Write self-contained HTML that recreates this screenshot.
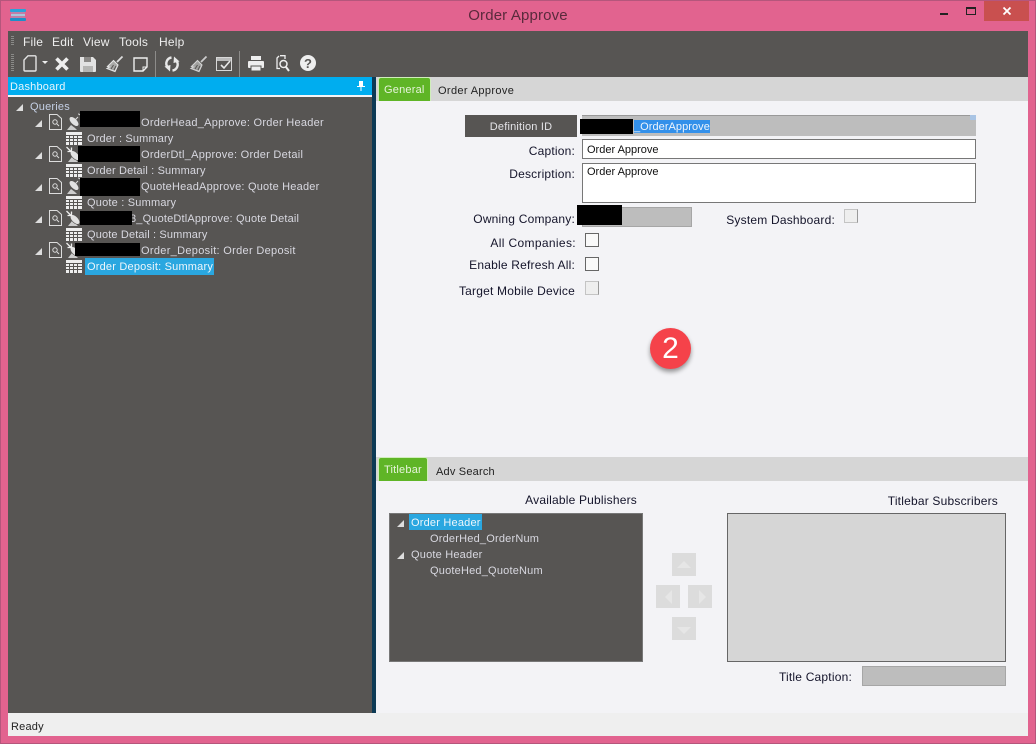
<!DOCTYPE html>
<html><head><meta charset="utf-8"><style>
html,body{margin:0;padding:0;width:1036px;height:744px;overflow:hidden;background:#e2638f;font-family:"Liberation Sans",sans-serif;font-size:11px}
.a{position:absolute;white-space:nowrap}
.t{position:absolute;white-space:nowrap;line-height:16px;margin-top:1px;color:#d8d8e0;letter-spacing:.2px}
.l{position:absolute;white-space:nowrap;line-height:16px;color:#14142a;text-align:right;letter-spacing:.2px}
.k{position:absolute;background:#000}
.cb{position:absolute;width:12px;height:12px;border:1px solid #666;background:#f9f9f9}
.cd{position:absolute;width:12px;height:12px;border:1px solid #c4c4c4;border-right-color:#999;background:#eee}
.m{position:absolute;color:#eee;font-size:12px;line-height:16px;letter-spacing:.2px}
svg{position:absolute;overflow:visible}
.bt{position:absolute;width:24px;height:23px;background:#dcdcdc}
</style></head><body>
<div class="a" style="left:0;top:0;width:1036px;height:744px;background:#e2638f;box-shadow:inset 0 0 0 1px #b5567c"></div>
<svg style="left:10px;top:9px" width="16" height="12"><rect x="0" y="0" width="16" height="3" rx="1" fill="#2aa3da"/><rect x="1" y="3" width="14" height="6" fill="#c07fa8"/><rect x="1" y="5" width="14" height="2" fill="#a9c6dc"/><rect x="0" y="9" width="16" height="3" rx="1" fill="#1d8fc8"/></svg>
<div class="a" style="left:0;width:1036px;top:7px;text-align:center;font-size:15px;line-height:18px;color:#5a2a3c;letter-spacing:.15px">Order Approve</div>
<div class="a" style="left:940px;top:13px;width:8px;height:2px;background:#222"></div>
<div class="a" style="left:966px;top:7px;width:8px;height:5px;border:1px solid #222;border-top-width:2px"></div>
<div class="a" style="left:984px;top:1px;width:45px;height:20px;background:#c9504f"></div>
<svg style="left:1003px;top:7px" width="8" height="8"><path d="M.5.5l7 7M7.5.5l-7 7" stroke="#fff" stroke-width="1.8"/></svg>

<div class="a" style="left:8px;top:31px;width:1020px;height:46px;background:#575553"></div>
<div class="a" style="left:11px;top:36px;width:3px;height:10px;background:repeating-linear-gradient(#8a8a88 0 1px,#575553 1px 2px)"></div>
<div class="a" style="left:11px;top:54px;width:3px;height:17px;background:repeating-linear-gradient(#8a8a88 0 1px,#575553 1px 2px)"></div>
<div class="m" style="left:23px;top:34px">File</div>
<div class="m" style="left:52px;top:34px">Edit</div>
<div class="m" style="left:83px;top:34px">View</div>
<div class="m" style="left:119px;top:34px">Tools</div>
<div class="m" style="left:159px;top:34px">Help</div>
<!-- toolbar icons -->
<svg style="left:23px;top:55px" width="14" height="17"><path d="M5 .8H12a1 1 0 0 1 1 1V15a1 1 0 0 1-1 1H2a1 1 0 0 1-1-1V5z" fill="none" stroke="#e4e4e4" stroke-width="1.4"/></svg>
<svg style="left:42px;top:61px" width="6" height="3"><path d="M0 0h6L3 3z" fill="#eee"/></svg>
<svg style="left:55px;top:57px" width="14" height="14"><path d="M1.500 1.500l11 11M12.500 1.500l-11 11" stroke="#eee" stroke-width="3.600"/></svg>
<svg style="left:80px;top:57px" width="16" height="15"><path d="M0 0h13l3 3v11a1 1 0 0 1-1 1H1a1 1 0 0 1-1-1z" fill="#e2e2e2"/><rect x="4" y="0" width="7" height="5" fill="#8a8886"/><rect x="3" y="9" width="10" height="6" fill="#b5b5b3"/></svg>
<svg style="left:106px;top:56px" width="17" height="16"><path d="M16.500.5L11 6" stroke="#ddd" stroke-width="1.800"/><path d="M7.500 4.500L12 9 9 15.500 1 12.500 3.500 11 1.500 10.500z" fill="#a9a9a7" stroke="#e4e4e4" stroke-width="1.100"/><path d="M5 13l2.500-4M8 14l2-4" stroke="#575553"/></svg>
<svg style="left:133px;top:57px" width="15" height="15"><path d="M1 1H14V10L10 14H1z" fill="none" stroke="#eee" stroke-width="1.400"/><path d="M14 10h-4v4" fill="none" stroke="#eee"/></svg>
<div class="a" style="left:155px;top:51px;width:1px;height:26px;background:#8d8c8a"></div>
<svg style="left:164px;top:56px" width="16" height="16"><g id="r"><path d="M7.500 1.500A6 6 0 0 0 3.500 11" fill="none" stroke="#e8e8e8" stroke-width="2.400"/><path d="M.5 10.500L6.500 9 6 15.500z" fill="#e8e8e8"/></g><g transform="rotate(180 8 8)"><path d="M7.500 1.500A6 6 0 0 0 3.500 11" fill="none" stroke="#e8e8e8" stroke-width="2.400"/><path d="M.5 10.500L6.500 9 6 15.500z" fill="#e8e8e8"/></g></svg>
<svg style="left:190px;top:56px" width="17" height="16"><path d="M16.500.5L11 6" stroke="#ccc" stroke-width="1.800"/><path d="M7.500 4.500L12 9 9 15.500 1 12.500 3.500 11 1.500 10.500z" fill="#a0a09e" stroke="#d4d4d4" stroke-width="1.100"/><path d="M5 13l2.500-4M8 14l2-4" stroke="#575553"/></svg>
<svg style="left:216px;top:57px" width="16" height="14"><rect x=".5" y=".5" width="15" height="13" fill="none" stroke="#d8d8d8"/><rect x="1" y="1" width="14" height="3" fill="#bbb"/><path d="M5 8l3 3 6-7" fill="none" stroke="#e8e8e8" stroke-width="1.600"/></svg>
<div class="a" style="left:239px;top:51px;width:1px;height:26px;background:#8d8c8a"></div>
<svg style="left:248px;top:56px" width="16" height="16"><rect x="3" y="0" width="10" height="4" fill="#eee"/><rect x="0" y="5" width="16" height="7" rx="1" fill="#eee"/><rect x="3" y="10" width="10" height="5" fill="#eee" stroke="#575553"/></svg>
<svg style="left:276px;top:55px" width="14" height="17"><path d="M4 .7H9V4M3 1L1 3V13.500H4" fill="none" stroke="#eee" stroke-width="1.300"/><circle cx="7.500" cy="9" r="3.500" fill="none" stroke="#eee" stroke-width="1.500"/><path d="M10 12l3 4" stroke="#eee" stroke-width="2"/></svg>
<svg style="left:300px;top:55px" width="16" height="16"><circle cx="8" cy="8" r="8" fill="#eee"/><text x="8" y="13" text-anchor="middle" font-size="13" font-weight="bold" fill="#575553" font-family="Liberation Sans">?</text></svg>

<!-- left pane -->
<div class="a" style="left:8px;top:77px;width:364px;height:18px;background:#00adef"></div>
<div class="t" style="left:10px;top:78px;color:#e8f6fc">Dashboard</div>
<svg style="left:357px;top:81px" width="8" height="10"><path d="M2 0h4v5h2v1H4.500v4h-1V6H0V5h2z" fill="#fff"/></svg>
<div class="a" style="left:8px;top:95px;width:364px;height:2px;background:#f4f4f6"></div>
<div class="a" style="left:8px;top:97px;width:364px;height:616px;background:#575553"></div>
<div class="a" style="left:372px;top:77px;width:4px;height:636px;background:#0d3a55"></div>

<svg style="left:16px;top:104px" width="7" height="7"><path d="M7 0V7H0z" fill="#ddd"/></svg>
<div class="t" style="left:30px;top:98px;color:#c4cfe4">Queries</div>

<!-- row 1 -->
<svg style="left:35px;top:120px" width="7" height="7"><path d="M7 0V7H0z" fill="#ddd"/></svg>
<svg style="left:49px;top:114px" width="13" height="16"><path d="M.5.5H8l4.500 4V15.500H.5z" fill="none" stroke="#ddd"/><circle cx="6" cy="8" r="2.200" fill="none" stroke="#ddd"/><path d="M8 10l2 2" stroke="#ddd"/></svg>
<svg style="left:66px;top:114px" width="16" height="16"><path d="M1 16L5 11l4 3 2 2z" fill="#ccc"/><ellipse cx="8" cy="7.500" rx="6" ry="3.200" transform="rotate(45 8 7.500)" fill="#e2e2e2" stroke="#575553" stroke-width=".6"/><path d="M9 6l3-3M12 0a3 3 0 0 1 3 3" stroke="#ddd" fill="none"/></svg>
<div class="k" style="left:80px;top:111px;width:60px;height:16px"></div>
<div class="t" style="left:141px;top:114px;letter-spacing:.26px">OrderHead_Approve: Order Header</div>

<svg style="left:66px;top:132px" width="16" height="13"><rect width="16" height="13" fill="#eee"/><path d="M0 3.500h16M0 6.500h16M0 9.500h16M3.500 3v10M7.500 3v10M11.500 3v10" stroke="#575553"/></svg>
<div class="t" style="left:87px;top:130px;letter-spacing:.14px">Order : Summary</div>

<!-- row 2 -->
<svg style="left:35px;top:152px" width="7" height="7"><path d="M7 0V7H0z" fill="#ddd"/></svg>
<svg style="left:49px;top:146px" width="13" height="16"><path d="M.5.5H8l4.500 4V15.500H.5z" fill="none" stroke="#ddd"/><circle cx="6" cy="8" r="2.200" fill="none" stroke="#ddd"/><path d="M8 10l2 2" stroke="#ddd"/></svg>
<svg style="left:66px;top:146px" width="16" height="16"><path d="M2 16L6 11l4 3 2 2z" fill="#ccc"/><ellipse cx="9" cy="9.500" rx="6" ry="3.200" transform="rotate(45 9 9.500)" fill="#e2e2e2" stroke="#575553" stroke-width=".6"/><path d="M.5 1L5 5.500M1.500 5.500H5.500V1.500" stroke="#eee" stroke-width="1.300" fill="none"/></svg>
<div class="k" style="left:78px;top:146px;width:62px;height:16px"></div>
<div class="t" style="left:141px;top:146px;letter-spacing:.27px">OrderDtl_Approve: Order Detail</div>

<svg style="left:66px;top:164px" width="16" height="13"><rect width="16" height="13" fill="#eee"/><path d="M0 3.500h16M0 6.500h16M0 9.500h16M3.500 3v10M7.500 3v10M11.500 3v10" stroke="#575553"/></svg>
<div class="t" style="left:87px;top:162px;letter-spacing:.14px">Order Detail : Summary</div>

<!-- row 3 -->
<svg style="left:35px;top:184px" width="7" height="7"><path d="M7 0V7H0z" fill="#ddd"/></svg>
<svg style="left:49px;top:178px" width="13" height="16"><path d="M.5.5H8l4.500 4V15.500H.5z" fill="none" stroke="#ddd"/><circle cx="6" cy="8" r="2.200" fill="none" stroke="#ddd"/><path d="M8 10l2 2" stroke="#ddd"/></svg>
<svg style="left:66px;top:178px" width="16" height="16"><path d="M1 16L5 11l4 3 2 2z" fill="#ccc"/><ellipse cx="8" cy="7.500" rx="6" ry="3.200" transform="rotate(45 8 7.500)" fill="#e2e2e2" stroke="#575553" stroke-width=".6"/><path d="M9 6l3-3M12 0a3 3 0 0 1 3 3" stroke="#ddd" fill="none"/></svg>
<div class="k" style="left:80px;top:178px;width:60px;height:18px"></div>
<div class="t" style="left:141px;top:178px">QuoteHeadApprove: Quote Header</div>

<svg style="left:66px;top:196px" width="16" height="13"><rect width="16" height="13" fill="#eee"/><path d="M0 3.500h16M0 6.500h16M0 9.500h16M3.500 3v10M7.500 3v10M11.500 3v10" stroke="#575553"/></svg>
<div class="t" style="left:87px;top:194px">Quote : Summary</div>

<!-- row 4 -->
<svg style="left:35px;top:216px" width="7" height="7"><path d="M7 0V7H0z" fill="#ddd"/></svg>
<svg style="left:49px;top:210px" width="13" height="16"><path d="M.5.5H8l4.500 4V15.500H.5z" fill="none" stroke="#ddd"/><circle cx="6" cy="8" r="2.200" fill="none" stroke="#ddd"/><path d="M8 10l2 2" stroke="#ddd"/></svg>
<svg style="left:66px;top:210px" width="16" height="16"><path d="M2 16L6 11l4 3 2 2z" fill="#ccc"/><ellipse cx="9" cy="9.500" rx="6" ry="3.200" transform="rotate(45 9 9.500)" fill="#e2e2e2" stroke="#575553" stroke-width=".6"/><path d="M.5 1L5 5.500M1.500 5.500H5.500V1.500" stroke="#eee" stroke-width="1.300" fill="none"/></svg>
<div class="t" style="left:130px;top:210px;letter-spacing:.17px">3_QuoteDtlApprove: Quote Detail</div>
<div class="k" style="left:80px;top:211px;width:52px;height:14px"></div>

<svg style="left:66px;top:228px" width="16" height="13"><rect width="16" height="13" fill="#eee"/><path d="M0 3.500h16M0 6.500h16M0 9.500h16M3.500 3v10M7.500 3v10M11.500 3v10" stroke="#575553"/></svg>
<div class="t" style="left:87px;top:226px;letter-spacing:.14px">Quote Detail : Summary</div>

<!-- row 5 -->
<svg style="left:35px;top:248px" width="7" height="7"><path d="M7 0V7H0z" fill="#ddd"/></svg>
<svg style="left:49px;top:242px" width="13" height="16"><path d="M.5.5H8l4.500 4V15.500H.5z" fill="none" stroke="#ddd"/><circle cx="6" cy="8" r="2.200" fill="none" stroke="#ddd"/><path d="M8 10l2 2" stroke="#ddd"/></svg>
<svg style="left:66px;top:242px" width="16" height="16"><path d="M2 16L6 11l4 3 2 2z" fill="#ccc"/><ellipse cx="9" cy="9.500" rx="6" ry="3.200" transform="rotate(45 9 9.500)" fill="#e2e2e2" stroke="#575553" stroke-width=".6"/><path d="M.5 1L5 5.500M1.500 5.500H5.500V1.500" stroke="#eee" stroke-width="1.300" fill="none"/></svg>
<div class="k" style="left:75px;top:243px;width:65px;height:13px"></div>
<div class="t" style="left:141px;top:242px;letter-spacing:.31px">Order_Deposit: Order Deposit</div>

<svg style="left:66px;top:260px" width="16" height="13"><rect width="16" height="13" fill="#eee"/><path d="M0 3.500h16M0 6.500h16M0 9.500h16M3.500 3v10M7.500 3v10M11.500 3v10" stroke="#575553"/></svg>
<div class="a" style="left:85px;top:258px;width:129px;height:17px;background:#2aa7e0"></div>
<div class="t" style="left:87px;top:258px;color:#eef6fb">Order Deposit: Summary</div>

<!-- right pane -->
<div class="a" style="left:376px;top:77px;width:652px;height:636px;background:#f3f3f6"></div>
<div class="a" style="left:376px;top:77px;width:652px;height:24px;background:#d6d6d6"></div>
<div class="a" style="left:378px;top:77px;width:53px;height:24px;background:#5fb526;border:1px solid #d0eebb;border-bottom:0;border-radius:3px 3px 0 0;box-sizing:border-box"></div>
<div class="t" style="left:384px;top:81px;color:#e6f4da">General</div>
<div class="t" style="left:438px;top:82px;color:#222;letter-spacing:.36px">Order Approve</div>

<div class="a" style="left:465px;top:115px;width:112px;height:22px;background:#575553"></div>
<div class="t" style="left:465px;top:118px;width:112px;text-align:center;color:#e4e4e8">Definition ID</div>
<div class="a" style="left:582px;top:115px;width:394px;height:21px;background:#bdbdbd;border-top:1px solid #999;box-sizing:border-box"></div>
<div class="a" style="left:970px;top:115px;width:6px;height:5px;background:#a9c4e4"></div>
<div class="a" style="left:634px;top:120px;width:76px;height:13px;background:#3390ea"></div>
<div class="k" style="left:580px;top:119px;width:53px;height:15px"></div>
<div class="t" style="left:634px;top:118px;color:#eef4fc;letter-spacing:.05px">_OrderApprove</div>

<div class="l" style="left:440px;width:135px;top:143px;font-size:12px">Caption:</div>
<div class="a" style="left:582px;top:139px;width:394px;height:20px;background:#fff;border:1px solid #777;box-sizing:border-box"></div>
<div class="t" style="left:587px;top:141px;color:#111;font-size:11px;letter-spacing:0">Order Approve</div>
<div class="l" style="left:440px;width:135px;top:166px;font-size:12px">Description:</div>
<div class="a" style="left:582px;top:163px;width:394px;height:40px;background:#fff;border:1px solid #777;box-sizing:border-box"></div>
<div class="t" style="left:587px;top:163px;color:#111;font-size:11px;letter-spacing:0">Order Approve</div>

<div class="l" style="left:440px;width:135px;top:211px;font-size:12px">Owning Company:</div>
<div class="a" style="left:582px;top:207px;width:110px;height:20px;background:#bdbdbd;border:1px solid #a6a6a6;box-sizing:border-box"></div>
<div class="k" style="left:577px;top:205px;width:45px;height:20px"></div>
<div class="l" style="left:700px;width:135px;top:212px;font-size:12px">System Dashboard:</div>
<div class="cd" style="left:844px;top:209px"></div>
<div class="l" style="left:440px;width:136px;top:235px;font-size:12px;letter-spacing:.35px">All Companies:</div>
<div class="cb" style="left:585px;top:233px"></div>
<div class="l" style="left:440px;width:135px;top:257px;font-size:12px">Enable Refresh All:</div>
<div class="cb" style="left:585px;top:257px"></div>
<div class="l" style="left:440px;width:135px;top:283px;font-size:12px">Target Mobile Device</div>
<div class="cd" style="left:585px;top:281px"></div>

<div class="a" style="left:650px;top:328px;width:41px;height:41px;border-radius:50%;background:#f5424a;box-shadow:0 3px 5px rgba(0,0,0,.4)"></div>
<div class="a" style="left:650px;top:328px;width:41px;text-align:center;font-size:30px;line-height:41px;color:#fff">2</div>

<!-- lower -->
<div class="a" style="left:376px;top:457px;width:652px;height:24px;background:#d6d6d6"></div>
<div class="a" style="left:378px;top:457px;width:50px;height:24px;background:#5fb526;border:1px solid #d0eebb;border-bottom:0;border-radius:3px 3px 0 0;box-sizing:border-box"></div>
<div class="t" style="left:384px;top:461px;color:#e6f4da">Titlebar</div>
<div class="t" style="left:436px;top:463px;color:#222">Adv Search</div>
<div class="l" style="left:437px;width:200px;top:492px;font-size:12px">Available Publishers</div>
<div class="a" style="left:389px;top:513px;width:254px;height:149px;background:#575553;border:1px solid #777;box-sizing:border-box"></div>
<svg style="left:397px;top:520px" width="7" height="7"><path d="M7 0V7H0z" fill="#ddd"/></svg>
<div class="a" style="left:409px;top:514px;width:73px;height:16px;background:#2aa7e0"></div>
<div class="t" style="left:411px;top:514px;color:#eef6fb">Order Header</div>
<div class="t" style="left:430px;top:530px">OrderHed_OrderNum</div>
<svg style="left:397px;top:552px" width="7" height="7"><path d="M7 0V7H0z" fill="#ddd"/></svg>
<div class="t" style="left:411px;top:546px">Quote Header</div>
<div class="t" style="left:430px;top:562px">QuoteHed_QuoteNum</div>

<div class="bt" style="left:672px;top:553px"></div><svg style="left:677px;top:561px" width="14" height="7"><path d="M7 0l7 7H0z" fill="#e6e6e6"/></svg>
<div class="bt" style="left:656px;top:585px"></div><svg style="left:665px;top:590px" width="7" height="14"><path d="M0 7l7-7v14z" fill="#e6e6e6"/></svg>
<div class="bt" style="left:688px;top:585px"></div><svg style="left:699px;top:590px" width="7" height="14"><path d="M7 7L0 0v14z" fill="#e6e6e6"/></svg>
<div class="bt" style="left:672px;top:617px"></div><svg style="left:677px;top:627px" width="14" height="7"><path d="M7 7L14 0H0z" fill="#e6e6e6"/></svg>

<div class="l" style="left:798px;width:200px;top:493px;font-size:12px">Titlebar Subscribers</div>
<div class="a" style="left:727px;top:513px;width:279px;height:149px;background:#d6d6d6;border:1px solid #666;box-sizing:border-box"></div>
<div class="l" style="left:652px;width:200px;top:669px;font-size:12px">Title Caption:</div>
<div class="a" style="left:862px;top:666px;width:144px;height:20px;background:#bdbdbd;border:1px solid #a6a6a6;box-sizing:border-box"></div>

<div class="a" style="left:8px;top:713px;width:1020px;height:23px;background:#efefef"></div>
<div class="t" style="left:11px;top:718px;color:#222">Ready</div>
</body></html>
